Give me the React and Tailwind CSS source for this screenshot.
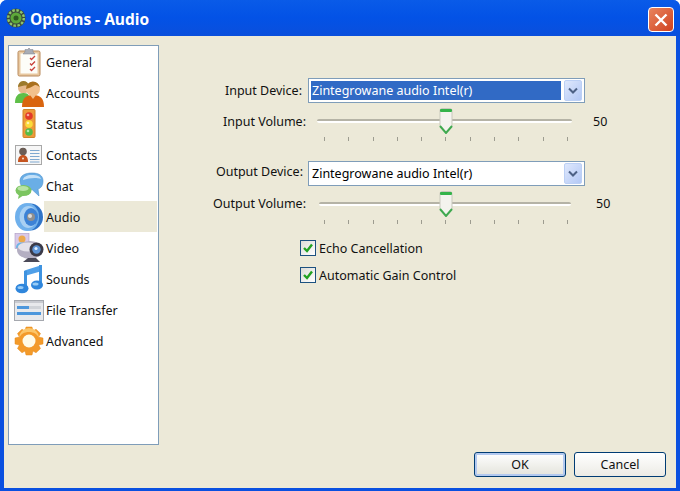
import React from "react";

const I = ({ children, w = 30, h = 30, vb = "0 0 30 30", cls = "" }) => (
  <svg width={w} height={h} viewBox={vb} className={`shrink-0 ${cls}`}>{children}</svg>
);

const General = () => (
  <I>
    <rect x="4" y="4" width="22" height="25" rx="1.500" fill="#e8c8a0" stroke="#b98a5c" />
    <rect x="6.500" y="6.500" width="17" height="20" fill="#fdfdf8" />
    <path d="M11 5V2.500h2.500L15 1l1.500 1.500H19V5l2 2H9z" fill="#a9adb5" stroke="#7e838c" strokeWidth=".5" />
    <path d="M16 11l1.500 1.500L21 9M16 16.500l1.500 1.500L21 14.500M16 22l1.500 1.500L21 20" fill="none" stroke="#c8413c" strokeWidth="1.300" />
  </I>
);
const Accounts = () => (
  <I>
    <circle cx="9.500" cy="10" r="5.500" fill="#e6b98d" />
    <path d="M4 9a5.500 5.500 0 0 1 11-1c-3-1-7 0-11 1z" fill="#9c7a2c" />
    <path d="M1 25c0-7 3-10 8.500-10S16 18 16 25z" fill="#5fbf48" />
    <circle cx="19" cy="11" r="7" fill="#f2c08c" />
    <path d="M12 11a7 7 0 0 1 14-1c-1-2-3-3-5-3-3 2-6 3-9 4z" fill="#a9701e" />
    <path d="M8 29c0-8 3-12 11-12s11 4 11 12z" fill="#d9650f" />
    <path d="M16 17l3 4 3-4z" fill="#f2c08c" />
  </I>
);
const Status = () => (
  <I>
    <rect x="9" y="0.500" width="12" height="28" rx="1" fill="#ee9a3a" stroke="#d08428" />
    <circle cx="15" cy="7" r="3.800" fill="#e23a2a" />
    <circle cx="15" cy="15" r="3.800" fill="#fbdc3a" />
    <circle cx="15" cy="23" r="3.800" fill="#56bb45" />
    <circle cx="14" cy="6" r="1.300" fill="#f7a99f" />
    <circle cx="14" cy="14" r="1.300" fill="#fff3b0" />
    <circle cx="14" cy="22" r="1.300" fill="#b5e8ac" />
  </I>
);
const Contacts = () => (
  <I>
    <rect x="1.500" y="5.500" width="26" height="19" fill="#f6f6f6" stroke="#a8a8a8" />
    <circle cx="9" cy="11.500" r="3.800" fill="#6b5d55" />
    <path d="M4 22c0-5 2-7 5-7s5 2 5 7z" fill="#c5541f" />
    <circle cx="9" cy="18.500" r="1" fill="#f5e1cc" />
    <path d="M16 10.500h9.500M16 13.500h9.500M16 16.500h9.500M16 19.500h9.500M16 22h9.500" stroke="#7fa8d0" strokeWidth="1.200" />
  </I>
);
const Chat = () => (
  <I>
    <path d="M6 10C6 4.500 11 2 18 2s11 2.500 11 8-3 7.500-5 8l1 7-7-6.500C11 18.500 6 16 6 10z" fill="#6aaee6" stroke="#4e92cc" strokeWidth=".6" />
    <path d="M9 9c0-3 4-5 9-5s8 1 9 4c-5-2-12-1-18 1z" fill="#c3e0f7" />
    <ellipse cx="9.500" cy="19.500" rx="8" ry="5.500" fill="#7cc561" />
    <path d="M5 23l-1 5 6-4z" fill="#7cc561" />
    <ellipse cx="9" cy="17.500" rx="5.500" ry="2.500" fill="#b7e3a4" />
  </I>
);
const Audio = () => (
  <I>
    <ellipse cx="16.500" cy="15" rx="12.500" ry="13.500" fill="#2f74c8" />
    <ellipse cx="13" cy="15" rx="12" ry="14" fill="#6fb0ec" />
    <ellipse cx="14.500" cy="15" rx="9" ry="11" fill="#a9d0f3" />
    <ellipse cx="17" cy="15" rx="7" ry="9" fill="#3c82d6" />
    <circle cx="17" cy="15" r="4" fill="#8f8f8f" />
    <circle cx="16" cy="14" r="2" fill="#dcdcdc" />
  </I>
);
const Video = () => (
  <I>
    <rect x="1" y="0.500" width="14" height="15" fill="#d9c9e8" stroke="#aa97c0" strokeWidth=".6" />
    <circle cx="8" cy="6" r="3.500" fill="#eba94d" />
    <path d="M2 15c0-4 2-5.500 6-5.500s6 1.500 6 5.500z" fill="#6db4e6" />
    <ellipse cx="16" cy="17" rx="13" ry="9" fill="#b4afc2" />
    <ellipse cx="14" cy="14" rx="10" ry="4.500" fill="#e4e2ea" />
    <circle cx="22.500" cy="16.500" r="7" fill="#3b3a48" />
    <circle cx="22.500" cy="16.500" r="4.200" fill="#5d93d6" />
    <circle cx="22" cy="15.500" r="1.600" fill="#e3f0ff" />
    <path d="M14 25h8l4 4H9z" fill="#4a4957" />
  </I>
);
const Sounds = () => (
  <I>
    <path d="M10.500 6.500L28 1v6L10.500 12z" fill="#4f9fe8" />
    <path d="M11.500 7v17" stroke="#3f93e0" strokeWidth="3" />
    <path d="M26.500 1v20" stroke="#3f93e0" strokeWidth="3" />
    <ellipse cx="8" cy="24.500" rx="6.500" ry="4.800" fill="#2f86dc" />
    <ellipse cx="23" cy="21" rx="6" ry="4.500" fill="#2f86dc" />
    <ellipse cx="6.500" cy="23.500" rx="3" ry="1.500" fill="#96cbf5" />
    <ellipse cx="21.500" cy="20" rx="3" ry="1.500" fill="#96cbf5" />
  </I>
);
const FileT = () => (
  <I>
    <rect x="0.500" y="5.500" width="29" height="20" fill="#e8e9ec" stroke="#a5a8ae" />
    <rect x="1" y="6" width="28" height="2" fill="#c8cad0" />
    <rect x="3" y="11" width="12" height="3" fill="#4d97dc" />
    <rect x="3" y="17" width="24" height="3" fill="#4d97dc" />
    <rect x="15" y="11" width="12" height="3" fill="#d0d3d8" />
  </I>
);
const Advanced = () => (
  <I>
    <path
      d="M12 1h6l1 4 3-1.800 4.500 4.300L24.600 11l4.400 1v6l-4.400 1 1.900 3.500L22 26.800 19 25l-1 4h-6l-1-4-3 1.800-4.500-4.300L5.400 19 1 18v-6l4.400-1-1.900-3.500L8 3.200 11 5z"
      fill="#f39a2a"
      stroke="#e58a1a"
      strokeWidth=".5"
    />
    <path d="M5 12a10 10 0 0 1 20 0c-2-4-5-6-10-6S7 8 5 12z" fill="#fbc66a" />
    <circle cx="15" cy="15" r="6.500" fill="#fffbe8" />
  </I>
);
const Logo = () => (
  <svg width="20" height="20" viewBox="0 0 20 20" className="shrink-0">
    <circle cx="10" cy="10" r="9.500" fill="#3b4a3c" />
    <circle cx="10" cy="10" r="7.800" fill="none" stroke="#8ec56b" strokeWidth="2.400" strokeDasharray="2.500 1.600" />
    <circle cx="10" cy="10" r="5.500" fill="#5da83a" />
    <circle cx="10" cy="10" r="2.500" fill="#2f5a20" />
  </svg>
);

const items = [
  ["General", General],
  ["Accounts", Accounts],
  ["Status", Status],
  ["Contacts", Contacts],
  ["Chat", Chat],
  ["Audio", Audio],
  ["Video", Video],
  ["Sounds", Sounds],
  ["File Transfer", FileT],
  ["Advanced", Advanced],
];

const Select = ({ selected }) => (
  <div className="ml-[6px] flex h-[25px] w-[277px] items-center border border-[#7f9db9] bg-white pl-[2px] pr-[2px]">
    <div className={`flex h-[19px] w-[250px] items-center pl-[1px] pt-[2px] ${selected ? "bg-[#316ac5] text-white" : "text-black"}`}>
      Zintegrowane audio Intel(r)
    </div>
    <div className="ml-[3px] flex h-[21px] w-[18px] items-center justify-center rounded-[2px] border border-[#bcd0f5] bg-gradient-to-br from-[#dfe8fc] to-[#b3c8f5]">
      <svg width="10" height="7" viewBox="0 0 10 7">
        <path d="M1 1.500l4 4 4-4" fill="none" stroke="#4d6185" strokeWidth="2" />
      </svg>
    </div>
  </div>
);

const Slider = ({ left, width, thumb, tickX, tickGap }) => (
  <div className="relative h-[34px] w-full">
    <div
      className="absolute top-[11px] h-[4px] rounded-full border-t-2 border-t-[#b5b3a6] border-b-2 border-b-white"
      style={{ left, width }}
    />
    <div className="absolute top-0" style={{ left: thumb }}>
      <svg width="14" height="26" viewBox="0 0 14 26">
        <path d="M1 2.500Q1 .500 3 .500h8q2 0 2 2V18l-6 7-6-7z" fill="#f4f3ee" stroke="#c9c8bd" />
        <rect x="1" y="1" width="12" height="3" rx="1" fill="#34b34a" />
        <path d="M1 18l6 7 6-7" fill="none" stroke="#3fa94f" strokeWidth="2" />
      </svg>
    </div>
    <div className="absolute top-[29px] flex" style={{ left: tickX, columnGap: tickGap - 1 }}>
      {Array.from({ length: 11 }).map((_, i) => (
        <div key={i} className="h-[4px] w-px bg-[#9d9c90]" />
      ))}
    </div>
  </div>
);

const Label = ({ w, children }) => (
  <div className="shrink-0 text-right" style={{ width: w }}>{children}</div>
);

const Check = ({ label, cls }) => (
  <div className={`flex h-[15px] items-center ${cls}`}>
    <div className="flex h-[16px] w-[16px] items-center justify-center border border-[#1c5180] bg-gradient-to-br from-[#dcdcd7] to-white">
      <svg width="12" height="12" viewBox="0 0 12 12">
        <path d="M2 6l3 3 5-6.500" fill="none" stroke="#21a121" strokeWidth="2.400" />
      </svg>
    </div>
    <span className="ml-[3px] pt-[3px]">{label}</span>
  </div>
);

export default function App() {
  return (
    <div
      className="flex h-[491px] w-[680px] flex-col overflow-hidden rounded-t-[7px] bg-[#0a50e0] text-[12.5px] text-[#111]"
      style={{ fontFamily: '"Noto Sans", sans-serif' }}
    >
      <div className="flex h-[36px] shrink-0 items-center bg-gradient-to-b from-[#0a5be8] via-[#0352e6] to-[#0a4fdc] pl-[6px] pr-[6px]">
        <Logo />
        <span className="ml-[4px] pt-[4px] text-[15.5px] font-bold text-white" style={{ fontFamily: '"Open Sans", sans-serif' }}>
          Options - Audio
        </span>
        <div className="ml-auto mt-[3px] flex h-[25px] w-[26px] items-center justify-center rounded-[4px] border border-white bg-gradient-to-br from-[#e8845e] to-[#cf3f1c]">
          <svg width="16" height="16" viewBox="0 0 16 16">
            <path d="M2.500 2.500l11 11M13.500 2.500l-11 11" stroke="#fff" strokeWidth="2.400" />
          </svg>
        </div>
      </div>
      <div className="mx-[4px] mb-[3px] flex flex-1 flex-col bg-[#ece9d8]">
        <div className="mt-[9px] flex h-[400px]">
          <div className="ml-[4px] h-[400px] w-[151px] shrink-0 border border-[#7f9db9] bg-white">
            {items.map(([name, Icon]) => (
              <div key={name} className="flex h-[31px] items-center">
                <div className="flex h-[31px] w-[35px] shrink-0 items-center justify-center pl-[5px]">
                  <Icon />
                </div>
                <div className={`mr-[1px] flex h-[31px] flex-1 items-center pl-[2px] pt-[4px] ${name === "Audio" ? "bg-[#ece9d8]" : ""}`}>
                  {name}
                </div>
              </div>
            ))}
          </div>
          <div className="flex-1 pt-[33px]">
            <div className="flex items-center">
              <Label w={143}><span className="block pt-[2px]">Input Device:</span></Label>
              <Select selected />
            </div>
            <div className="mt-[5px] flex">
              <Label w={147}><span className="block pt-[5px]">Input Volume:</span></Label>
              <div className="relative flex-1">
                <Slider left={11} width={255} thumb={133} tickX={18} tickGap={24.3} />
                <span className="absolute left-[287px] top-[5px]">50</span>
              </div>
            </div>
            <div className="mt-[19px] flex items-center">
              <Label w={144}><span className="block pb-[2px]">Output Device:</span></Label>
              <div className="-ml-[1px]"><Select /></div>
            </div>
            <div className="mt-[5px] flex">
              <Label w={147}><span className="block pt-[4px]">Output Volume:</span></Label>
              <div className="relative flex-1">
                <Slider left={13} width={252} thumb={133} tickX={18} tickGap={24.3} />
                <span className="absolute left-[290px] top-[4px]">50</span>
              </div>
            </div>
            <div className="ml-[141px] mt-[15px]">
              <Check label="Echo Cancellation" />
              <Check label="Automatic Gain Control" cls="mt-[12px]" />
            </div>
          </div>
        </div>
        <div className="mt-[7px] flex justify-end gap-[8px] pr-[10px]">
          <button className="h-[25px] w-[92px] rounded-[3px] border border-[#003c74] bg-gradient-to-b from-white to-[#e3e3db] pt-[2px] shadow-[inset_0_0_0_2px_#b3c9ef]">OK</button>
          <button className="h-[25px] w-[92px] rounded-[3px] border border-[#003c74] bg-gradient-to-b from-white to-[#ecebe5] pt-[2px]">Cancel</button>
        </div>
      </div>
    </div>
  );
}
